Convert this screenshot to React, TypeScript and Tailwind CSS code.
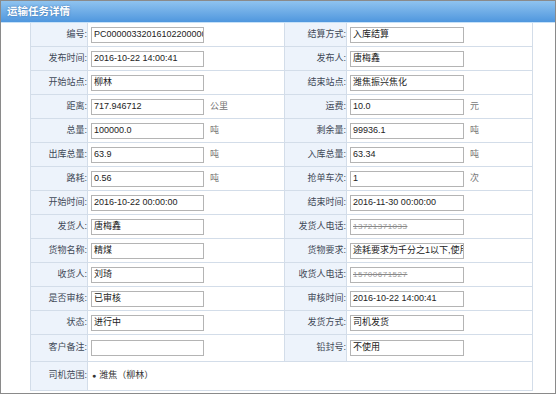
import React from "react";

const CJK = '"Liberation Sans", "Noto Sans CJK SC", sans-serif';

type Cell = { label: string; value?: string; unit?: string; masked?: boolean; empty?: boolean };

const rows: [Cell, Cell][] = [
  [{ label: "编号:", value: "PC00000332016102200000" }, { label: "结算方式:", value: "入库结算" }],
  [{ label: "发布时间:", value: "2016-10-22 14:00:41" }, { label: "发布人:", value: "唐梅鑫" }],
  [{ label: "开始站点:", value: "柳林" }, { label: "结束站点:", value: "潍焦振兴焦化" }],
  [{ label: "距离:", value: "717.946712", unit: "公里" }, { label: "运费:", value: "10.0", unit: "元" }],
  [{ label: "总量:", value: "100000.0", unit: "吨" }, { label: "剩余量:", value: "99936.1", unit: "吨" }],
  [{ label: "出库总量:", value: "63.9", unit: "吨" }, { label: "入库总量:", value: "63.34", unit: "吨" }],
  [{ label: "路耗:", value: "0.56", unit: "吨" }, { label: "抢单车次:", value: "1", unit: "次" }],
  [{ label: "开始时间:", value: "2016-10-22 00:00:00" }, { label: "结束时间:", value: "2016-11-30 00:00:00" }],
  [{ label: "发货人:", value: "唐梅鑫" }, { label: "发货人电话:", value: "13721371033", masked: true }],
  [{ label: "货物名称:", value: "精煤" }, { label: "货物要求:", value: "途耗要求为千分之1以下,使用煤车" }],
  [{ label: "收货人:", value: "刘琦" }, { label: "收货人电话:", value: "15700671527", masked: true }],
  [{ label: "是否审核:", value: "已审核" }, { label: "审核时间:", value: "2016-10-22 14:00:41" }],
  [{ label: "状态:", value: "进行中" }, { label: "发货方式:", value: "司机发货" }],
  [{ label: "客户备注:", value: "" }, { label: "铅封号:", value: "不使用" }],
];

function Label({ text, h }: { text: string; h: string }) {
  return (
    <div
      className={`${h} flex items-center justify-end bg-[#edf3fb] border-r border-b border-[#d3dde9] text-[9px] text-[#3f4957] whitespace-nowrap`}
    >
      {text}
    </div>
  );
}

function Value({ cell, h, w }: { cell: Cell; h: string; w: string }) {
  return (
    <div className={`${h} flex items-center border-r border-b border-[#d3dde9] pl-[3px] bg-white`}>
      <div
        className={`${w} h-[16px] border border-[#b4b4b4] bg-white flex items-center px-[2px] overflow-hidden whitespace-nowrap text-[9px] text-[#222]`}
      >
        {cell.masked ? (
          <span className="text-[8px] text-[#9a9a9a] line-through decoration-[#888] tracking-[0.5px]">{cell.value}</span>
        ) : (
          cell.value
        )}
      </div>
      {cell.unit && <span className="ml-[6px] text-[9px] text-[#777]">{cell.unit}</span>}
    </div>
  );
}

export default function App() {
  return (
    <div className="w-[556px] h-[394px] bg-white" style={{ fontFamily: CJK }}>
      <div className="w-[556px] h-[394px] border border-[#8a8a8a] flex flex-col bg-white">
        <div className="h-[22px] shrink-0 bg-gradient-to-b from-[#8fc3ef] to-[#4f97de] border-b border-[#c6e1f8] flex items-center pl-[6px]">
          <span className="text-white font-bold text-[10.5px] [text-shadow:0_0_2px_#3a6fa8]">运输任务详情</span>
        </div>
        <div className="pl-[29px]">
          <div className="w-[503px] border-l border-[#d3dde9] grid grid-cols-[57px_197px_62px_186px]">
            {rows.map((r, i) => {
              const h = i === 13 ? "h-[27px]" : "h-[24px]";
              return (
                <React.Fragment key={i}>
                  <Label text={r[0].label} h={h} />
                  <Value cell={r[0]} h={h} w="w-[113px]" />
                  <Label text={r[1].label} h={h} />
                  <Value cell={r[1]} h={h} w="w-[114px]" />
                </React.Fragment>
              );
            })}
            <Label text="司机范围:" h="h-[29px]" />
            <div className="col-span-3 h-[29px] flex items-center border-r border-b border-[#d3dde9] pl-[4px] text-[9px] text-[#333]">
              <span className="text-[7px] mr-[3px]">●</span>
              <span>潍焦（柳林）</span>
            </div>
          </div>
        </div>
      </div>
    </div>
  );
}
